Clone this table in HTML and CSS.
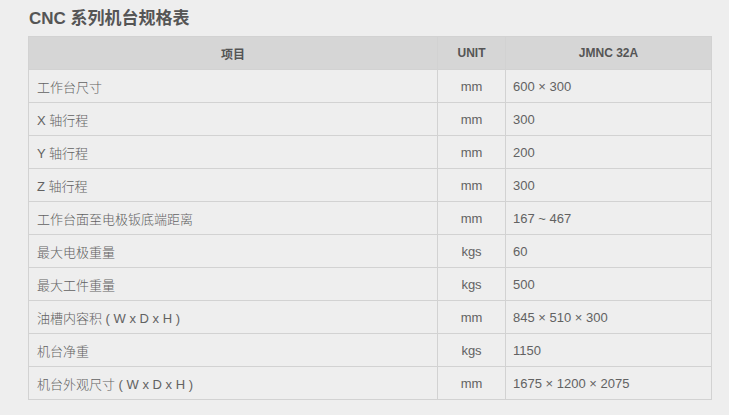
FILE: index.html
```html
<!DOCTYPE html>
<html lang="zh">
<head>
<meta charset="utf-8">
<link rel="stylesheet" href="styles.css">
</head>
<body>
<div class="page">
  <h2 class="title">CNC 系列机台规格表</h2>
  <table class="spec">
    <colgroup>
      <col class="c-item">
      <col class="c-unit">
      <col class="c-val">
    </colgroup>
    <thead>
      <tr><th>项目</th><th>UNIT</th><th>JMNC 32A</th></tr>
    </thead>
    <tbody>
      <tr><td>工作台尺寸</td><td class="u">mm</td><td>600 × 300</td></tr>
      <tr><td>X 轴行程</td><td class="u">mm</td><td>300</td></tr>
      <tr><td>Y 轴行程</td><td class="u">mm</td><td>200</td></tr>
      <tr><td>Z 轴行程</td><td class="u">mm</td><td>300</td></tr>
      <tr><td>工作台面至电极钣底端距离</td><td class="u">mm</td><td>167 ~ 467</td></tr>
      <tr><td>最大电极重量</td><td class="u">kgs</td><td>60</td></tr>
      <tr><td>最大工件重量</td><td class="u">kgs</td><td>500</td></tr>
      <tr><td>油槽内容积 ( W x D x H )</td><td class="u">mm</td><td>845 × 510 × 300</td></tr>
      <tr><td>机台净重</td><td class="u">kgs</td><td>1150</td></tr>
      <tr><td>机台外观尺寸 ( W x D x H )</td><td class="u">mm</td><td>1675 × 1200 × 2075</td></tr>
    </tbody>
  </table>
</div>
</body>
</html>
```

FILE: styles.css
```css
html, body {
  margin: 0;
  padding: 0;
  background: #eeeeee;
}
body {
  font-family: "Liberation Sans", "Noto Sans CJK SC", sans-serif;
  color: #626262;
}
.page {
  padding: 9px 0 0 28px;
}
.title {
  margin: 0 0 0 1px;
  font-size: 17px;
  line-height: 20px;
  font-weight: bold;
  color: #555555;
  height: 27px;
}
.spec {
  border-collapse: collapse;
  width: 683px;
  table-layout: fixed;
  font-size: 13px;
}
.c-item { width: 409px; }
.c-unit { width: 68px; }
.c-val { width: 206px; }
.spec th, .spec td {
  border: 1px solid #d2d2d2;
  height: 33px;
  padding: 0 7px;
  vertical-align: middle;
  box-sizing: border-box;
}
.spec th {
  background: #d6d6d6;
  font-weight: bold;
  font-size: 12px;
  text-align: center;
  color: #555555;
}
.spec td {
  text-align: left;
  font-weight: 300;
}
.spec td:first-child {
  padding-left: 8px;
}
.spec td.u {
  text-align: center;
}
```
